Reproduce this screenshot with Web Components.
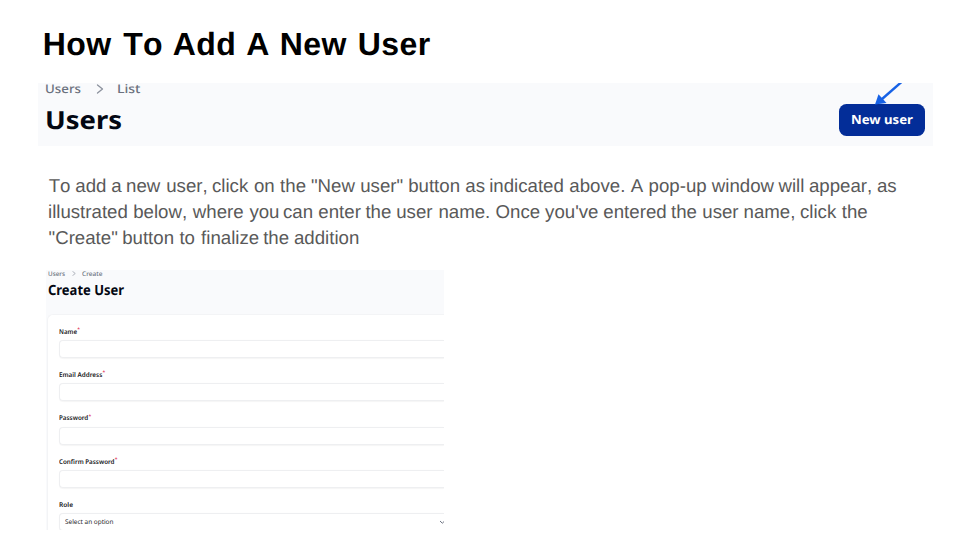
<!DOCTYPE html>
<html lang="en">
<head>
<meta charset="utf-8">
<title>How To Add A New User</title>
<style>
html,body{margin:0;background:#fff}
body{width:960px;height:540px;overflow:hidden;font-family:"Liberation Sans",Arial,sans-serif;text-rendering:geometricPrecision}
</style>
</head>
<body>
<guide-slide></guide-slide>
<script>
const define = (name, html, ready) => customElements.define(name, class extends HTMLElement {
  connectedCallback() {
    if (this.shadowRoot) return;
    const t = document.createElement('template');
    t.innerHTML = html;
    this.attachShadow({mode: 'open'}).append(t.content.cloneNode(true));
    if (ready) ready.call(this, this.shadowRoot);
  }
});

// One line of text stretched horizontally to the width in "w".
define('fit-text', `<style>
:host{display:block;white-space:nowrap;line-height:1;flex:none}
span{display:inline-block;transform-origin:0 0}
</style><span><slot></slot></span>`, function (root) {
  const s = root.querySelector('span'), w = +this.getAttribute('w');
  this.style.width = w + 'px';
  s.style.transform = `scaleX(${w / s.getBoundingClientRect().width})`;
});

// A line of copy whose words start at the given stops.
define('copy-line', `<style>
:host{display:block;height:26px;line-height:26px;white-space:pre;font-size:18.67px;color:#595959;font-kerning:none}
</style>`, function (root) {
  const stops = this.getAttribute('stops').split(' ').map(Number);
  const ctx = document.createElement('canvas').getContext('2d');
  const cs = getComputedStyle(this), size = parseFloat(cs.fontSize);
  ctx.font = cs.fontWeight + ' 200px "Liberation Sans"';
  this.textContent.trim().split(' ').forEach((word, i) => {
    const s = document.createElement('span');
    s.textContent = word + ' ';
    root.append(s);
    const bearing = -ctx.measureText(word).actualBoundingBoxLeft * size / 200;
    s.style.marginLeft = stops[i] + .4 - bearing - s.getBoundingClientRect().left + 'px';
  });
});

define('crumb-chevron', `<style>:host{display:block;flex:none}svg{display:block;width:100%;height:100%}</style>
<svg viewBox="0 0 8 10" fill="none" stroke="#8b919d" stroke-width="1.3" stroke-linecap="round" stroke-linejoin="round"><path d="M1.5 1 6.5 5 1.5 9"/></svg>`);

define('new-user-button', `<style>
:host{display:flex;box-sizing:border-box;width:86px;height:32px;border-radius:7.5px;background:#032d98;align-items:center;padding-left:12px;color:#fff;font:700 12.5px "Noto Sans",sans-serif;position:relative}
fit-text{padding-top:1px}
svg{position:absolute;left:34px;top:-21px;width:34px;height:22px}
</style>
<fit-text w="62">New user</fit-text>
<svg viewBox="0 1 34 22"><path d="M28.5 0 8.5 17.5" stroke="#1762e6" stroke-width="2.4"/><path d="M2 22.5 5.5 12.2 13.5 20.9Z" fill="#1762e6"/></svg>`);

define('users-banner', `<style>
:host{display:flex;box-sizing:border-box;width:895px;height:63px;background:#f9fafc;justify-content:space-between;padding:0 8.5px 0 7px;font-family:"Noto Sans",sans-serif}
.crumbs{display:flex;align-items:center;height:11px;color:#6b717e;font-size:12px;font-weight:500}
crumb-chevron{width:8px;height:10px;margin:0 13px 0 15px}
.title{font-size:25px;font-weight:700;color:#030712;margin-top:13.5px}
new-user-button{margin-top:21px}
</style>
<div><div class="crumbs"><fit-text w="36">Users</fit-text><crumb-chevron></crumb-chevron><fit-text w="23.5">List</fit-text></div>
<fit-text class="title" w="77">Users</fit-text></div>
<new-user-button></new-user-button>`);

define('form-field', `<style>
:host{display:block;height:43.3px}
.label{display:flex;height:10px;align-items:center;font-size:6.5px;font-weight:600;color:#18181b;padding-top:1px}
i{font:500 5px "Noto Sans",sans-serif;color:#e11d48;line-height:6px;align-self:flex-start;margin-left:.2px}
.input{box-sizing:border-box;height:18px;margin-top:3px;border:1px solid #eeeff1;border-right:0;border-radius:4px 0 0 4px;background:#fff;display:flex;align-items:center;box-shadow:0 .5px 1px #0000000a;font-size:6.5px;color:#27272a}
</style>
<div class="label"><fit-text></fit-text></div><div class="input"><slot></slot></div>`, function (root) {
  const old = root.querySelector('fit-text'), t = document.createElement('fit-text');
  t.setAttribute('w', this.getAttribute('w'));
  t.textContent = this.getAttribute('label');
  old.replaceWith(t);
  if (this.hasAttribute('required')) {
    const i = document.createElement('i'); i.textContent = '*'; t.after(i);
  }
});

define('create-panel', `<style>
:host{display:block;box-sizing:border-box;width:398px;height:260px;background:#f9fafc;overflow:hidden;font-family:"Noto Sans",sans-serif}
header{box-sizing:border-box;height:44px;padding-left:2px}
.crumbs{display:flex;align-items:center;height:7.5px;color:#6b7280;font-size:6.3px;font-weight:500}
crumb-chevron{width:4px;height:5px;margin:0 6px 0 7px}
.title{font-size:14px;font-weight:700;color:#030712;margin-top:6.8px}
main{box-sizing:border-box;height:216px;margin-left:1px;background:#fff;border:solid #f3f4f6;border-width:1px 0 0 1.5px;border-radius:6px 0 0 0;padding:11px 0 0 11px}
.select{display:flex;width:100%;justify-content:space-between;align-items:center;padding-left:5px;margin-right:-1px}
svg{width:6px;height:4px;display:block}
</style>
<header><div class="crumbs"><fit-text w="17">Users</fit-text><crumb-chevron></crumb-chevron><fit-text w="20.5">Create</fit-text></div>
<fit-text class="title" w="76">Create User</fit-text></header>
<main>
<form-field label="Name" w="18" required></form-field>
<form-field label="Email Address" w="43.3" required></form-field>
<form-field label="Password" w="29.3" required></form-field>
<form-field label="Confirm Password" w="55.5" required></form-field>
<form-field label="Role" w="14"><div class="select"><fit-text w="48.5">Select an option</fit-text><svg viewBox="0 0 6 4" fill="none" stroke="#6b7280" stroke-width="1"><path d="M1 1 3.3 3.2 5.6 1"/></svg></div></form-field>
</main>`);

define('guide-slide', `<style>
:host{display:flex;flex-direction:column;box-sizing:border-box;width:960px;height:540px;padding:27px 0 0 38px;overflow:hidden}
h1{margin:0 0 0 4px;height:56px}
h1 copy-line{height:34px;font-weight:700;font-size:32px;line-height:35px;letter-spacing:.4px;color:#000}
section{margin-top:27px;height:97px;flex:none}
create-panel{margin-left:8px;flex:none}
users-banner{flex:none}
</style>
<h1><copy-line stops="44.4 123.1 173.1 246.5 281.5 359.3">How To Add A New User</copy-line></h1>
<users-banner></users-banner>
<section>
<copy-line stops="48.6 75.7 111.6 126.8 166.9 212.3 254.3 280 311.3 360.9 408.9 465.7 490 569.7 630.3 649.3 711.3 778 809.3 877.3">To add a new user, click on the "New user" button as indicated above. A pop-up window will appear, as</copy-line>
<copy-line stops="48.8 133.9 192.3 249 283.3 318.7 365.3 396.9 439.2 496 544.7 603.7 670.9 703 744.3 800.3 841.7">illustrated below, where you can enter the user name. Once you've entered the user name, click the</copy-line>
<copy-line stops="48.9 122.9 179.3 200.9 263 294.3">"Create" button to finalize the addition</copy-line>
</section>
<create-panel></create-panel>`);
</script>
</body>
</html>
